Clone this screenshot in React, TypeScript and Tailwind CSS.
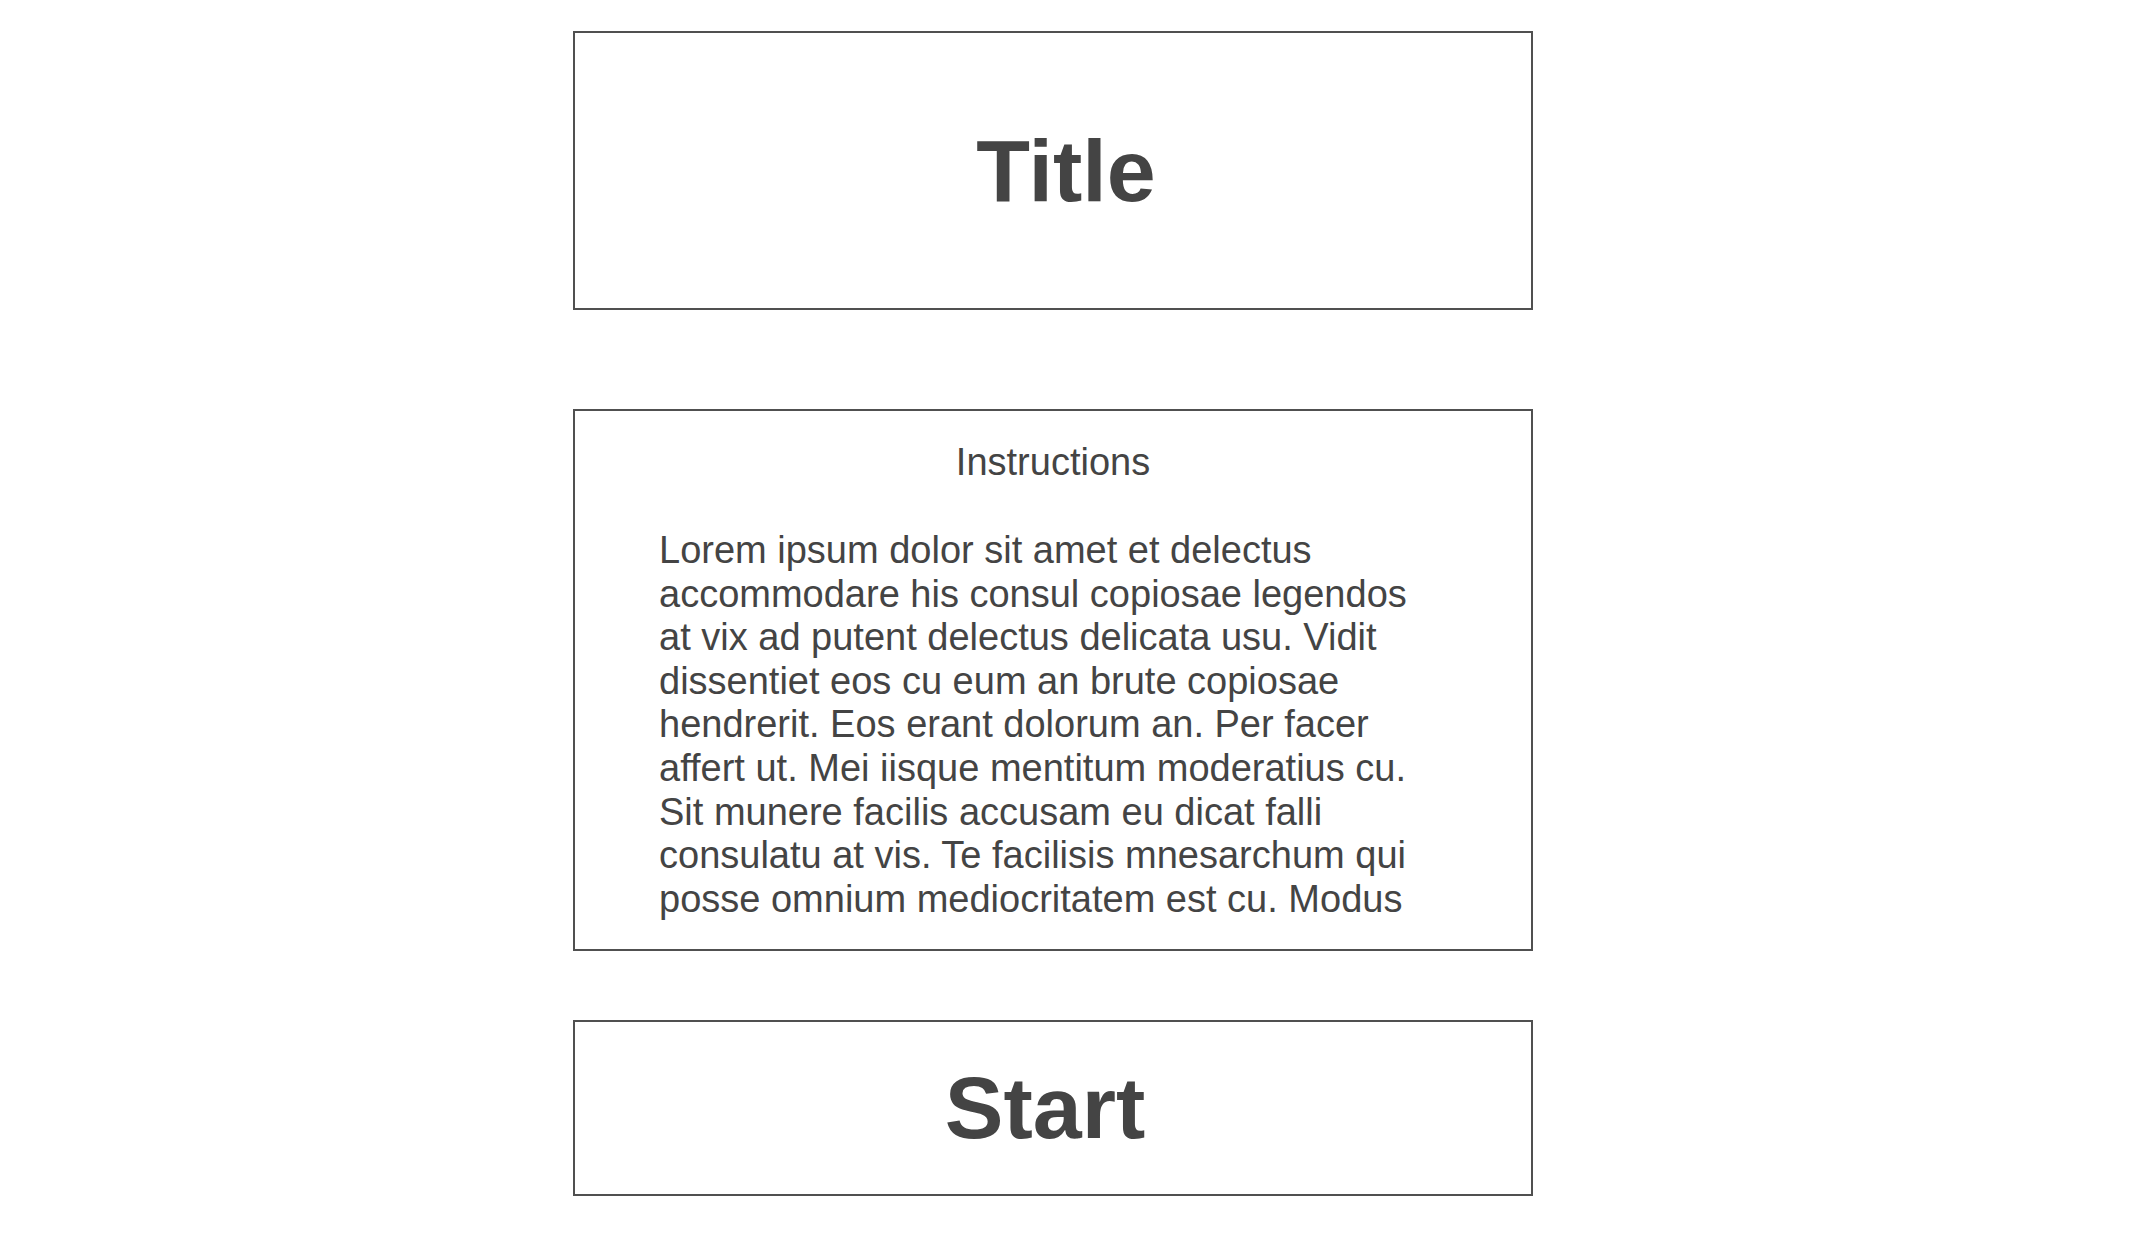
export default function App() {
  const lorem =
    'Lorem ipsum dolor sit amet et delectus accommodare his consul copiosae legendos at vix ad putent delectus delicata usu. Vidit dissentiet eos cu eum an brute copiosae hendrerit. Eos erant dolorum an. Per facer affert ut. Mei iisque mentitum moderatius cu. Sit munere facilis accusam eu dicat falli consulatu at vis. Te facilisis mnesarchum qui posse omnium mediocritatem est cu. Modus';

  return (
    <div className="min-h-screen bg-white font-['Liberation_Sans',Arial,sans-serif] text-[#444444]">
      <div className="ml-[573px] flex w-[960px] flex-col pt-[31px]">
        {/* Title */}
        <div className="flex h-[279px] items-center justify-center border-2 border-[#505050] pl-[26px]">
          <h1 className="text-[88px] font-bold leading-none">Title</h1>
        </div>

        {/* Instructions */}
        <div className="mt-[99px] flex h-[542px] flex-col overflow-hidden border-2 border-[#505050] pt-[29px]">
          <h2 className="text-center text-[38px] leading-[44px]">Instructions</h2>
          <p className="ml-[84px] mt-[45px] w-[775px] text-[38px] leading-[43.6px]">{lorem}</p>
        </div>

        {/* Start */}
        <button className="mt-[69px] flex h-[176px] items-center justify-center border-2 border-[#505050] pr-[16px]">
          <span className="text-[88px] font-bold leading-none">Start</span>
        </button>
      </div>
    </div>
  );
}
